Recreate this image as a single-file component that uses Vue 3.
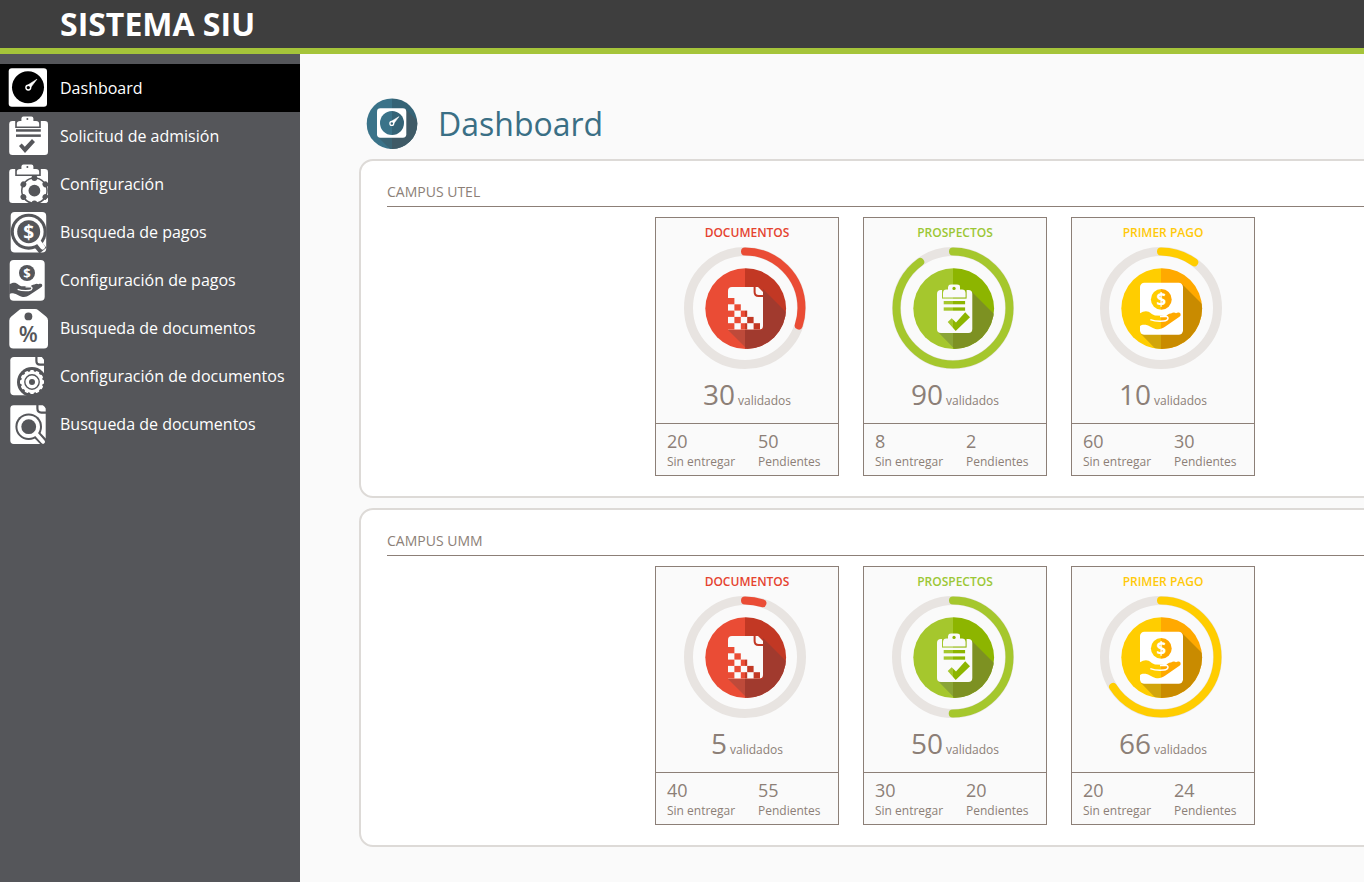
<script setup>
const menu = [
  { label: 'Dashboard', icon: 'gauge', active: true },
  { label: 'Solicitud de admisión', icon: 'form' },
  { label: 'Configuración', icon: 'formGear' },
  { label: 'Busqueda de pagos', icon: 'paySearch' },
  { label: 'Configuración de pagos', icon: 'payHand' },
  { label: 'Busqueda de documentos', icon: 'tag' },
  { label: 'Configuración de documentos', icon: 'docGear' },
  { label: 'Busqueda de documentos', icon: 'docSearch' }
]

const kinds = {
  documentos: { title: 'DOCUMENTOS', light: '#ea4c35', dark: '#c23824', shadeL: '#be4a3a', shadeR: '#a13a2e' },
  prospectos: { title: 'PROSPECTOS', light: '#a5c72d', dark: '#8db500', shadeL: '#8aa437', shadeR: '#7d9122' },
  pago: { title: 'PRIMER PAGO', light: '#ffcd00', dark: '#ffa900', shadeL: '#d2a50a', shadeR: '#c98b00' }
}

const campuses = [
  {
    name: 'CAMPUS UTEL',
    cards: [
      { kind: 'documentos', done: 30, missing: 20, pending: 50 },
      { kind: 'prospectos', done: 90, missing: 8, pending: 2 },
      { kind: 'pago', done: 10, missing: 60, pending: 30 }
    ]
  },
  {
    name: 'CAMPUS UMM',
    cards: [
      { kind: 'documentos', done: 5, missing: 40, pending: 55 },
      { kind: 'prospectos', done: 50, missing: 30, pending: 20 },
      { kind: 'pago', done: 66, missing: 20, pending: 24 }
    ]
  }
]

const shadows = {
  documentos: '79,42 122,85 122,122 83,122 44,83 79,83',
  prospectos: '80,45 122,87 122,122 82,122 46,85 80,85',
  pago: '82,37 124,79 124,122 75,122 41,87 82,87'
}

const checker = []
for (let r = 0; r < 5; r++) {
  for (let c = 0; c <= r; c++) {
    if ((r + c) % 2 === 0) checker.push({ x: 44 + c * 6.4, y: 51 + r * 6.3 })
  }
}

const hand = 'M40 66.2 C43 64.4 46 63.6 48.6 64.8 C51 66 52.6 68 55 68.6 L62 68.8 L66 69.2 C67 68 69 66.4 71 66.6 C73 65 75 65.4 76 66.2 C78 65 80.6 65.8 80.6 67.2 C81 69 79.6 69.8 78 70.8 L65 79.8 C62 82 59 82.8 55.4 82 C52 81 49 78.4 45.6 77.8 C43 77.4 41.4 78 40 79 Z'
const finger = 'M50.3 72.6 C54 74 59 74.4 64 74 C68.6 73.6 69.4 69.6 65.4 69.2 L60 69.4'

const ringLength = 2 * Math.PI * 56.5
const dash = (value) => `${(ringLength * value) / 100} ${ringLength}`
</script>

<template>
  <div class="page">
    <header class="topbar">SISTEMA SIU</header>
    <div class="body">
      <nav class="sidebar" aria-label="Principal">
        <ul>
          <li v-for="(item, i) in menu" :key="i">
            <a href="#" :class="{ active: item.active }">
              <svg class="nav-icon" viewBox="0 0 60 48" aria-hidden="true">
                <g v-if="item.icon === 'gauge'">
                  <rect x="8.7" y="4.3" width="38.3" height="38.5" rx="3.2" fill="#fff" />
                  <circle cx="28" cy="23.3" r="16" fill="#000" />
                  <path d="M36.9 15.2 L28.2 20.8 L30.6 23.6 Z" fill="#fff" stroke="#fff" stroke-width="0.6" />
                  <circle cx="28.3" cy="23.6" r="2.4" fill="#000" stroke="#fff" stroke-width="1.4" />
                </g>
                <g v-else-if="item.icon === 'form' || item.icon === 'formGear'">
                  <rect x="9.2" y="9" width="38.8" height="34" rx="3.2" fill="#fff" />
                  <path class="cut" d="M15.2 8.8 H40.8 V16 H15.2 Z" />
                  <path d="M16.8 14.6 V11.6 Q17 9 20 9 H21.4 V6.6 Q21.6 4.6 23.4 4.6 H31.4 Q33.4 4.6 33.4 6.6 V9 H36 Q39.2 9 39.2 12 V14.6 Z" fill="#fff" />
                  <circle class="cut" cx="27.4" cy="7" r="1" />
                  <template v-if="item.icon === 'form'">
                    <rect class="cut" x="16" y="17.2" width="24.8" height="2.5" />
                    <rect class="cut" x="16" y="22.4" width="24.8" height="2.5" />
                    <polygon class="cut" points="19,34 21.7,31.6 24.8,34.8 32,27 35,30 25,41" />
                  </template>
                  <template v-else>
                    <circle class="cut" cx="34.4" cy="30.7" r="13.4" />
                    <circle cx="34.4" cy="30.7" r="11.9" fill="#fff" />
                    <circle
                      v-for="n in 6"
                      :key="n"
                      class="cut"
                      cx="34.4"
                      cy="18"
                      r="2.9"
                      :transform="`rotate(${n * 60} 34.4 30.7)`"
                    />
                    <circle class="cut" cx="34.4" cy="30.7" r="5.9" />
                    <path d="M41.5 43 Q46 40.5 48 37.6 V40 Q48 43 45 43 Z" fill="#fff" />
                  </template>
                </g>
                <g v-else-if="item.icon === 'paySearch'">
                  <rect x="10.7" y="4" width="35.5" height="40.6" rx="4" fill="#fff" />
                  <circle class="cut" cx="28.7" cy="23.7" r="18" />
                  <path class="cut-line" d="M35 33 L43 42.6" stroke-width="9" />
                  <circle cx="28.7" cy="23.7" r="14.9" fill="#fff" />
                  <path d="M37 32 L42.6 39" stroke="#fff" stroke-width="5" stroke-linecap="round" />
                  <circle class="cut" cx="28.7" cy="23.7" r="11.5" />
                  <text x="28.7" y="30.6" font-size="19" class="glyph">$</text>
                </g>
                <g v-else-if="item.icon === 'payHand'">
                  <rect x="9.7" y="4" width="35" height="40.7" rx="4" fill="#fff" />
                  <circle class="cut" cx="27" cy="17" r="8" />
                  <text x="27" y="21.8" font-size="13" class="glyph">$</text>
                  <g transform="translate(-23.1 -24) scale(0.81 0.79)">
                    <path class="cut" :d="hand" />
                    <path :d="finger" fill="none" stroke="#fff" stroke-width="1.7" />
                  </g>
                </g>
                <g v-else-if="item.icon === 'tag'">
                  <path d="M22 5 H35 Q37 5 38.6 6.4 L46 12.4 Q48 14 48 16.4 V40.6 Q48 44.6 44 44.6 H13.4 Q9.3 44.6 9.3 40.6 V16.4 Q9.3 14 11.3 12.4 L18.6 6.4 Q20 5 22 5 Z" fill="#fff" />
                  <circle class="cut" cx="28.4" cy="12.4" r="3.9" />
                  <text x="28.2" y="38.4" font-size="22" class="glyph percent">%</text>
                </g>
                <g v-else-if="item.icon === 'docGear'">
                  <path d="M14 5 H44 V43.3 H14 Q10.3 43.3 10.3 39.6 V8.6 Q10.3 5 14 5 Z" fill="#fff" />
                  <path class="cut-line" d="M36.4 4 V9 Q36.4 12.6 40 12.6 H45" stroke-width="2.2" />
                  <path class="cut" d="M41 4 H45 V9 Z" />
                  <circle class="cut" cx="32" cy="30" r="15" />
                  <rect class="cut" x="32" y="30" width="13" height="14" />
                  <circle cx="32" cy="30" r="10.8" fill="#fff" />
                  <rect
                    v-for="n in 12"
                    :key="n"
                    x="30.1"
                    y="18"
                    width="3.8"
                    height="5"
                    rx="1"
                    fill="#fff"
                    :transform="`rotate(${n * 30} 32 30)`"
                  />
                  <circle class="cut-line" cx="32" cy="30" r="7.2" stroke-width="1.4" />
                  <circle class="cut" cx="32" cy="30" r="3" />
                </g>
                <g v-else>
                  <rect x="10.3" y="5.3" width="35.4" height="38.6" rx="3.4" fill="#fff" />
                  <path class="cut-line" d="M37.4 4 V8.6 Q37.4 12.6 41.4 12.6 H46.4" stroke-width="2.2" />
                  <path class="cut" d="M42 4 H47 V9.4 Z" />
                  <circle class="cut" cx="28.7" cy="26.7" r="13.3" />
                  <path class="cut-line" d="M36 34 L45.6 44" stroke-width="8" />
                  <circle cx="28.7" cy="26.7" r="11.3" fill="#fff" />
                  <path d="M35.6 33.4 L43 41.8" stroke="#fff" stroke-width="4" stroke-linecap="round" />
                  <circle class="cut" cx="28.7" cy="26.7" r="7.4" />
                </g>
              </svg>
              <span>{{ item.label }}</span>
            </a>
          </li>
        </ul>
      </nav>

      <main class="content">
        <div class="heading">
          <svg class="heading-icon" viewBox="0 0 52 52" aria-hidden="true">
            <defs>
              <clipPath id="head-disc"><circle cx="26" cy="25.7" r="25.3" /></clipPath>
              <linearGradient id="head-tone" gradientUnits="userSpaceOnUse" x1="0" x2="52" y1="0" y2="0">
                <stop offset="0.5" stop-color="#3a7389" />
                <stop offset="0.5" stop-color="#346376" />
              </linearGradient>
            </defs>
            <g clip-path="url(#head-disc)">
              <rect width="52" height="52" fill="url(#head-tone)" />
              <polygon points="39.5,11 52,23.5 52,52 26,52 26,39 39.5,39" fill="#3f5a66" />
              <polygon points="12,39 26,39 26,53" fill="#3b6575" />
            </g>
            <rect x="11" y="10.3" width="29.3" height="29.4" rx="3.4" fill="#fff" />
            <circle cx="26" cy="25" r="12" fill="url(#head-tone)" />
            <path d="M33 18.6 L25.8 23 L27.9 25.4 Z" fill="#fff" stroke="#fff" stroke-width="0.5" />
            <circle cx="25.8" cy="25.4" r="1.9" fill="#346376" stroke="#fff" stroke-width="1.3" />
          </svg>
          <h1>Dashboard</h1>
        </div>

        <section v-for="(campus, ci) in campuses" :key="campus.name" class="panel">
          <h2>{{ campus.name }}</h2>
          <div class="cards">
            <article v-for="card in campus.cards" :key="card.kind" class="card">
              <div class="summary">
                <h3 :class="card.kind">{{ kinds[card.kind].title }}</h3>
                <div class="gauge">
                  <svg viewBox="0 0 122 122" aria-hidden="true">
                    <defs>
                      <clipPath :id="`disc-${ci}-${card.kind}`"><circle cx="61.7" cy="61.6" r="40.4" /></clipPath>
                      <linearGradient :id="`tone-${ci}-${card.kind}`" gradientUnits="userSpaceOnUse" x1="0" x2="122" y1="0" y2="0">
                        <stop offset="0.504" :stop-color="kinds[card.kind].light" />
                        <stop offset="0.504" :stop-color="kinds[card.kind].dark" />
                      </linearGradient>
                      <linearGradient :id="`shade-${ci}-${card.kind}`" gradientUnits="userSpaceOnUse" x1="0" x2="122" y1="0" y2="0">
                        <stop offset="0.504" :stop-color="kinds[card.kind].shadeL" />
                        <stop offset="0.504" :stop-color="kinds[card.kind].shadeR" />
                      </linearGradient>
                    </defs>
                    <circle cx="61" cy="61" r="56.5" fill="none" stroke="#e8e4e1" stroke-width="9" />
                    <circle
                      cx="61"
                      cy="61"
                      r="56.5"
                      fill="none"
                      :stroke="kinds[card.kind].light"
                      stroke-width="8"
                      stroke-linecap="round"
                      :stroke-dasharray="dash(card.done)"
                      transform="rotate(-90 61 61)"
                    />
                    <g :clip-path="`url(#disc-${ci}-${card.kind})`">
                      <rect width="122" height="122" :fill="`url(#tone-${ci}-${card.kind})`" />
                      <polygon :points="shadows[card.kind]" :fill="`url(#shade-${ci}-${card.kind})`" />
                    </g>
                    <g v-if="card.kind === 'documentos'">
                      <path d="M48 40 H74 L79 45 V79 Q79 82.5 75 82.5 H44 V44 Q44 40 48 40 Z" fill="#fafafa" />
                      <path d="M70.6 39.8 V45 Q70.6 49 74.6 49 H79.2" fill="none" stroke="#c23824" stroke-width="2" />
                      <rect
                        v-for="(cell, k) in checker"
                        :key="k"
                        :x="cell.x"
                        :y="cell.y"
                        width="6.4"
                        height="6.3"
                        :fill="`url(#tone-${ci}-${card.kind})`"
                      />
                    </g>
                    <g v-else-if="card.kind === 'prospectos'">
                      <rect x="45" y="43" width="35.3" height="43" rx="4" fill="#fafafa" />
                      <path d="M50 42.8 H74.6 V51.6 H50 Z" :fill="`url(#tone-${ci}-${card.kind})`" />
                      <path d="M51 50.4 V46 Q51.2 42.6 54.4 42.6 H56 V40 Q56.4 37.6 59 37.6 H65 Q68 37.6 68 40 V42.6 H70 Q73.4 42.6 73.6 46 V50.4 Z" fill="#fafafa" />
                      <g :fill="`url(#tone-${ci}-${card.kind})`">
                        <circle cx="62" cy="41.4" r="1.7" />
                        <rect x="51.7" y="54" width="21.4" height="3.3" />
                        <rect x="51.7" y="60.4" width="21.4" height="3.3" />
                        <polygon points="55.7,75 59.7,71.2 64,75.4 73.2,65.2 78,70.2 63.7,84" />
                      </g>
                    </g>
                    <g v-else>
                      <rect x="40" y="35.7" width="43" height="52" rx="4.4" fill="#fff" />
                      <circle cx="61.3" cy="52.4" r="10.4" :fill="`url(#tone-${ci}-${card.kind})`" />
                      <text x="61.3" y="58.5" font-size="17" class="glyph">$</text>
                      <path :d="hand" :fill="`url(#tone-${ci}-${card.kind})`" />
                      <path :d="finger" fill="none" stroke="#fff" stroke-width="1.5" />
                    </g>
                  </svg>
                </div>
                <p class="total"><strong>{{ card.done }}</strong><span>validados</span></p>
              </div>
              <dl class="stats">
                <div>
                  <dd>{{ card.missing }}</dd>
                  <dt>Sin entregar</dt>
                </div>
                <div>
                  <dd>{{ card.pending }}</dd>
                  <dt>Pendientes</dt>
                </div>
              </dl>
            </article>
          </div>
        </section>
      </main>
    </div>
  </div>
</template>

<style>
body {
  background: #fafafa;
}
</style>

<style scoped>
.page {
  display: flex;
  flex-direction: column;
  min-height: 100vh;
  font-family: "Open Sans", "Noto Sans", sans-serif;
  color: #8c7f77;
}
h1,
h2,
h3,
p,
ul,
dl,
dd {
  margin: 0;
  padding: 0;
}
.topbar {
  background: #3e3e3e;
  border-bottom: 6px solid #a5c43a;
  padding-left: 60px;
  font-size: 32px;
  line-height: 48px;
  font-weight: 700;
  color: #fff;
}
.body {
  display: flex;
  flex: 1;
}
.sidebar {
  flex: 0 0 300px;
  background: #55565a;
  padding-top: 10px;
}
.sidebar ul {
  list-style: none;
}
.sidebar a {
  display: flex;
  align-items: center;
  color: #fff;
  font-size: 16px;
  line-height: 24px;
  text-decoration: none;
}
.sidebar a.active {
  background: #000;
}
.nav-icon {
  width: 60px;
  height: 48px;
}
.cut {
  fill: #55565a;
}
.cut-line {
  fill: none;
  stroke: #55565a;
}
.glyph {
  font-family: "Open Sans", "Noto Sans", sans-serif;
  font-weight: 700;
  text-anchor: middle;
  fill: #fff;
}
.percent {
  font-weight: 600;
  fill: #55565a;
}
.content {
  flex: 1;
  min-width: 0;
  overflow: hidden;
  padding: 44px 0 35px 59px;
}
.heading {
  display: flex;
  align-items: center;
  gap: 20px;
  padding-left: 7px;
  margin-bottom: 9px;
}
.heading-icon {
  width: 52px;
  height: 52px;
}
h1 {
  font-size: 32px;
  line-height: 48px;
  font-weight: 400;
  color: #3a6f85;
}
.panel {
  box-sizing: border-box;
  min-width: 1192px;
  padding: 21px 26px 20px;
  background: #fff;
  border: 2px solid #dddad7;
  border-radius: 14px;
}
.panel + .panel {
  margin-top: 10px;
}
h2 {
  font-size: 14px;
  line-height: 20px;
  font-weight: 400;
  padding-bottom: 4px;
  border-bottom: 1px solid #8c7f77;
  margin-bottom: 10px;
}
.cards {
  display: flex;
  justify-content: center;
  gap: 24px;
}
.card {
  width: 182px;
  background: #fafafa;
  border: 1px solid #8c7f77;
}
.summary {
  padding: 7px 0 13px;
  text-align: center;
  border-bottom: 1px solid #8c7f77;
}
h3 {
  font-size: 12px;
  line-height: 16px;
  font-weight: 600;
}
h3.documentos {
  color: #e5432f;
}
h3.prospectos {
  color: #9cc735;
}
h3.pago {
  color: #ffc90a;
}
.gauge {
  display: flex;
  justify-content: center;
  padding: 6px 4px 9px 0;
}
.gauge svg {
  width: 122px;
  height: 122px;
}
.total {
  display: flex;
  justify-content: center;
  align-items: baseline;
  gap: 3px;
  font-size: 12px;
  line-height: 16px;
}
.total strong {
  font-size: 28px;
  line-height: 32px;
  font-weight: 500;
}
.stats {
  display: grid;
  grid-template-columns: 1fr 1fr;
  padding: 7px 0 5px;
}
.stats div {
  display: flex;
  flex-direction: column;
  gap: 3px;
  padding-left: 11px;
}
.stats dd {
  font-size: 18px;
  line-height: 20px;
  font-weight: 500;
}
.stats dt {
  font-size: 12px;
  line-height: 16px;
}
</style>
